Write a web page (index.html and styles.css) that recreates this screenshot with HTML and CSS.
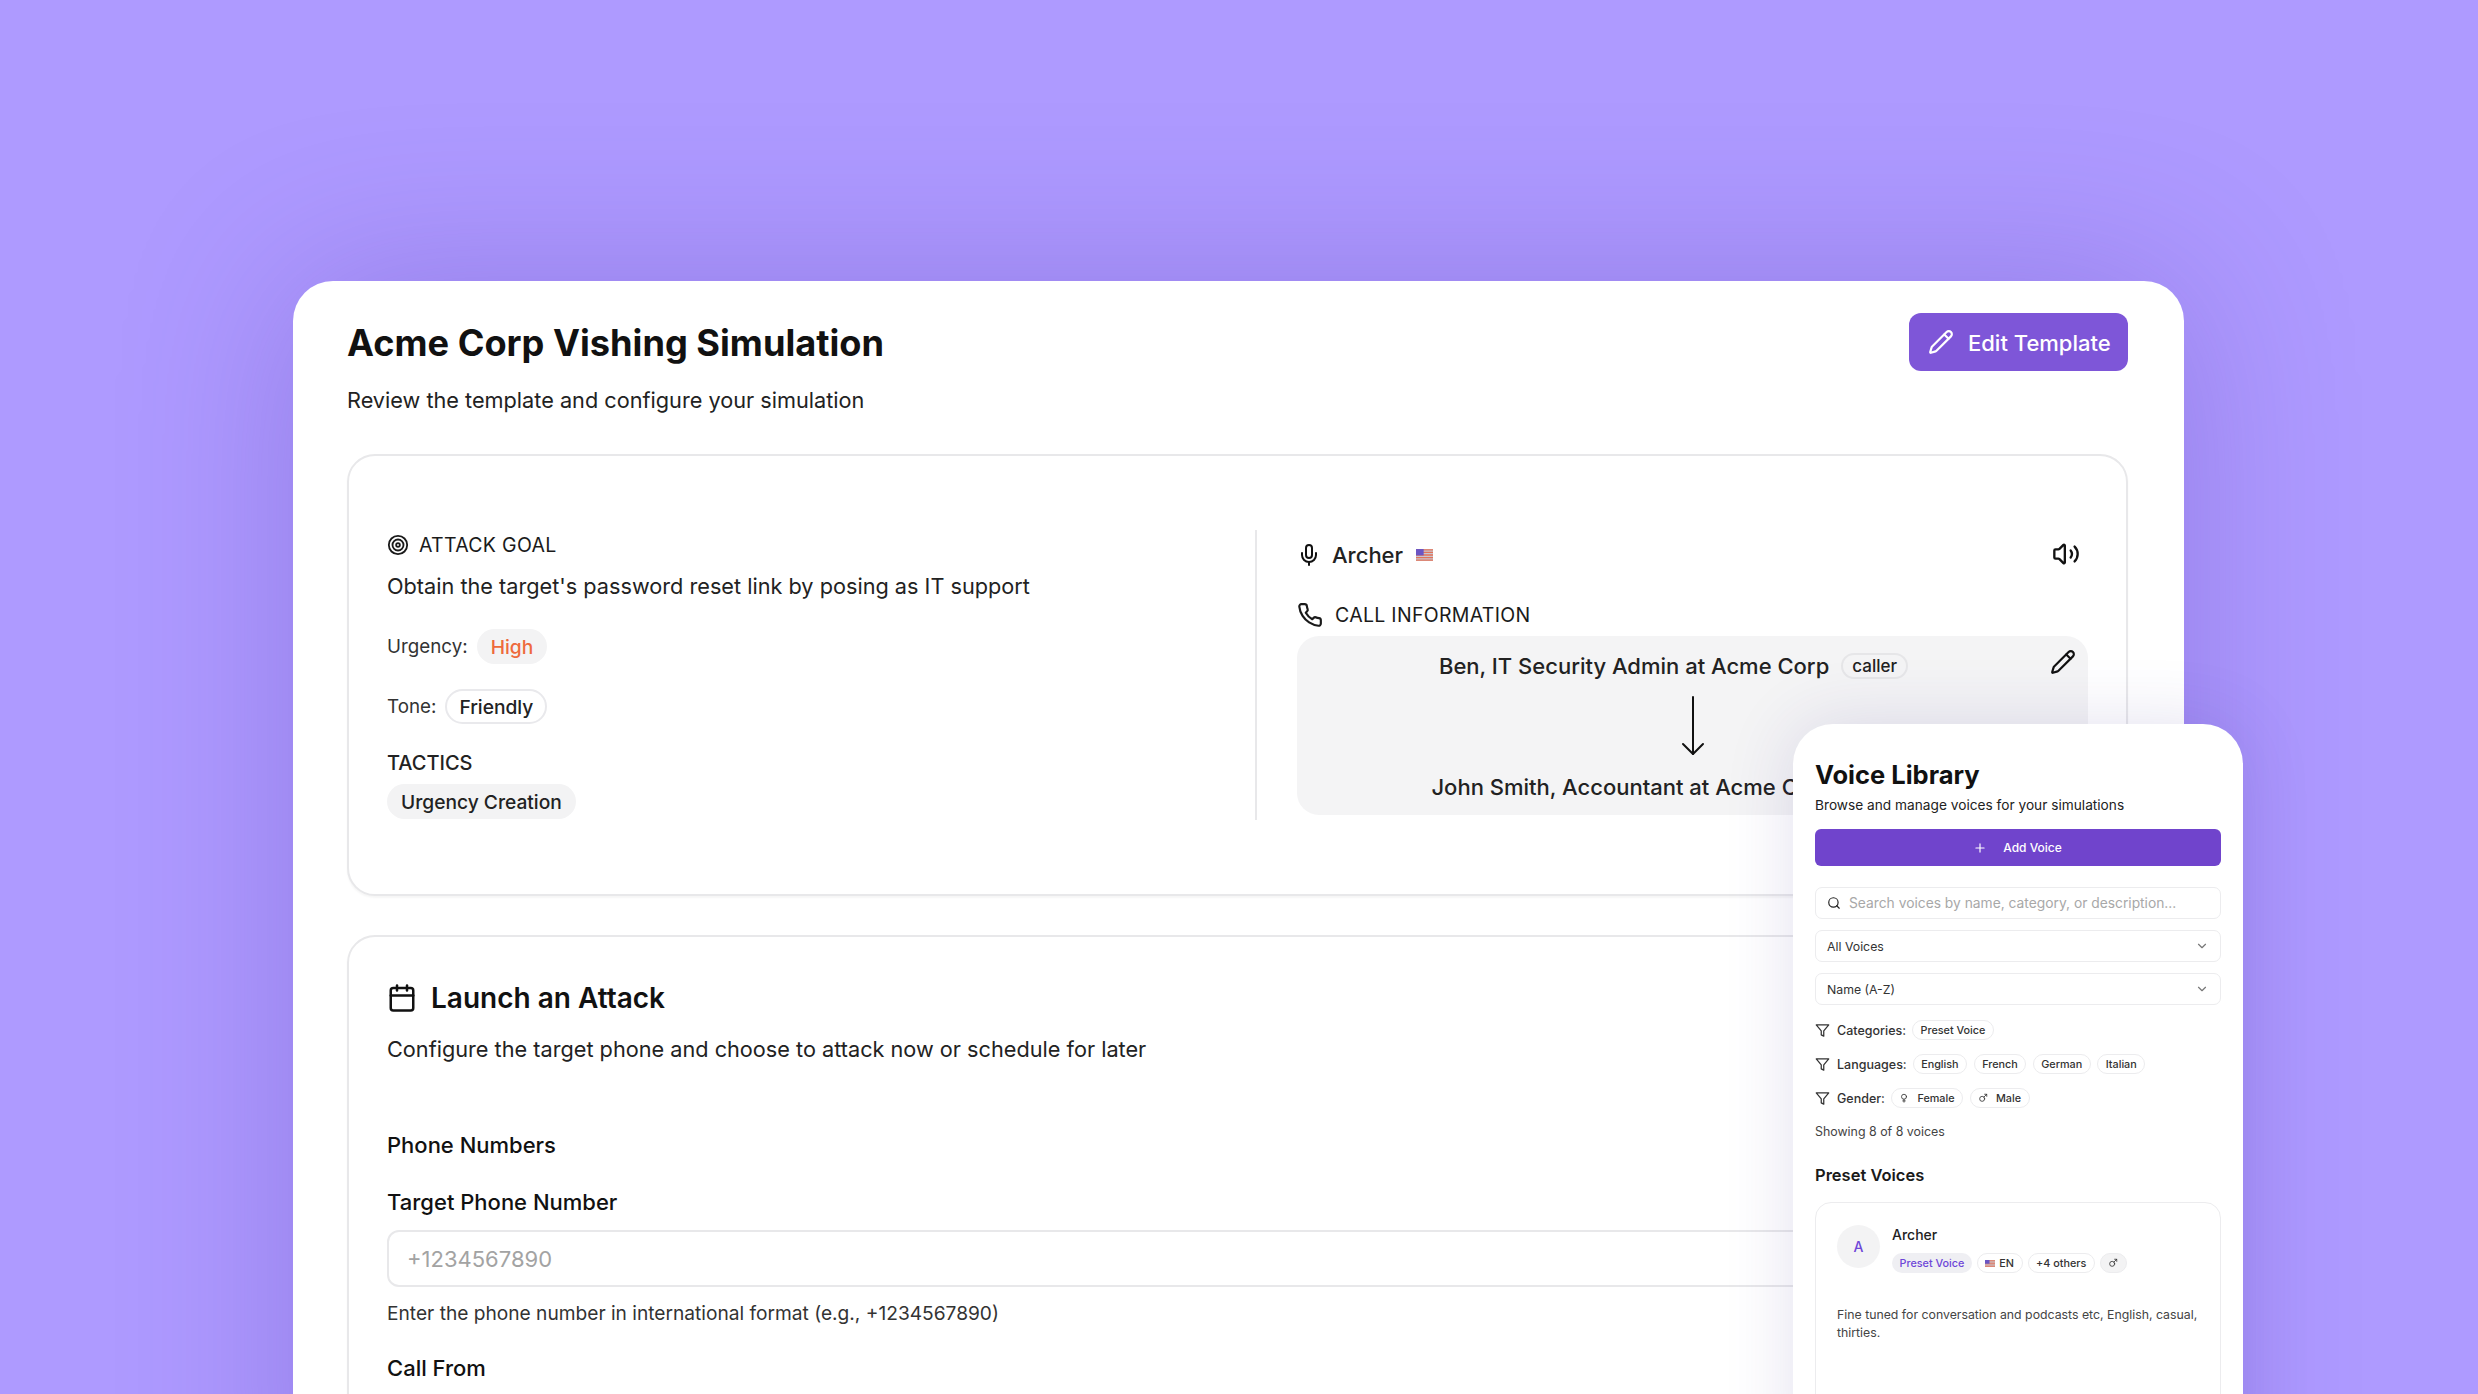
FILE: index.html
```html
<!DOCTYPE html>
<html lang="en">
<head>
  <meta charset="UTF-8">
  <title>Acme Corp Vishing Simulation</title>
  <link rel="stylesheet" href="styles.css">
</head>
<body>
  <svg class="sprite" aria-hidden="true">
    <symbol id="i-pencil" viewBox="0 0 24 24"><path d="M21.174 6.812a1 1 0 0 0-3.986-3.987L3.842 16.174a2 2 0 0 0-.5.83l-1.321 4.352a.5.5 0 0 0 .623.622l4.353-1.32a2 2 0 0 0 .83-.497z"/><path d="m15 5 4 4"/></symbol>
    <symbol id="i-target" viewBox="0 0 24 24"><circle cx="12" cy="12" r="10"/><circle cx="12" cy="12" r="6"/><circle cx="12" cy="12" r="2"/></symbol>
    <symbol id="i-mic" viewBox="0 0 24 24"><path d="M12 19v3"/><path d="M19 10v2a7 7 0 0 1-14 0v-2"/><rect x="9" y="2" width="6" height="13" rx="3"/></symbol>
    <symbol id="i-volume" viewBox="0 0 24 24"><path d="M11 4.702a.705.705 0 0 0-1.203-.498L6.413 7.587A1.4 1.4 0 0 1 5.416 8H3a1 1 0 0 0-1 1v6a1 1 0 0 0 1 1h2.416a1.4 1.4 0 0 1 .997.413l3.383 3.384A.705.705 0 0 0 11 19.298z"/><path d="M16 9a5 5 0 0 1 0 6"/><path d="M19.364 18.364a9 9 0 0 0 0-12.728"/></symbol>
    <symbol id="i-phone" viewBox="0 0 24 24"><path d="M22 16.92v3a2 2 0 0 1-2.18 2 19.79 19.79 0 0 1-8.63-3.07 19.5 19.5 0 0 1-6-6 19.79 19.79 0 0 1-3.07-8.67A2 2 0 0 1 4.11 2h3a2 2 0 0 1 2 1.72 12.84 12.84 0 0 0 .7 2.81 2 2 0 0 1-.45 2.11L8.09 9.91a16 16 0 0 0 6 6l1.27-1.27a2 2 0 0 1 2.11-.45 12.84 12.84 0 0 0 2.81.7A2 2 0 0 1 22 16.92z"/></symbol>
    <symbol id="i-arrow" viewBox="0 0 24 60"><path d="M12 1v57"/><path d="m2 48 10 10 10-10"/></symbol>
    <symbol id="i-calendar" viewBox="0 0 24 24"><path d="M8 2v4"/><path d="M16 2v4"/><rect x="3" y="4" width="18" height="18" rx="2"/><path d="M3 10h18"/></symbol>
    <symbol id="i-plus" viewBox="0 0 24 24"><path d="M5 12h14"/><path d="M12 5v14"/></symbol>
    <symbol id="i-search" viewBox="0 0 24 24"><path d="m21 21-4.34-4.34"/><circle cx="11" cy="11" r="8"/></symbol>
    <symbol id="i-chevron" viewBox="0 0 24 24"><path d="m6 9 6 6 6-6"/></symbol>
    <symbol id="i-filter" viewBox="0 0 24 24"><polygon points="22 3 2 3 10 12.46 10 19 14 21 14 12.46 22 3"/></symbol>
    <symbol id="i-venus" viewBox="0 0 24 24"><path d="M12 15v7"/><path d="M9 19h6"/><circle cx="12" cy="9" r="6"/></symbol>
    <symbol id="i-mars" viewBox="0 0 24 24"><path d="M16 3h5v5"/><path d="m21 3-6.75 6.75"/><circle cx="10" cy="14" r="6"/></symbol>
    <symbol id="i-flag" viewBox="0 0 20 14">
      <rect width="20" height="14" fill="#c9c6cf"/>
      <path d="M0 1h20M0 4h20M0 7h20M0 10h20M0 13h20" stroke="#e2735a" stroke-width="1.5"/>
      <rect width="9" height="7.5" fill="#6a55c4"/>
    </symbol>
  </svg>

  <main class="app">
    <header class="page-head">
      <div>
        <h1>Acme Corp Vishing Simulation</h1>
        <p class="page-sub">Review the template and configure your simulation</p>
      </div>
      <button class="edit-btn"><svg class="icon icon-26"><use href="#i-pencil"/></svg>Edit Template</button>
    </header>

    <section class="card summary">
      <div class="goal">
        <div class="label"><svg class="icon icon-22"><use href="#i-target"/></svg>ATTACK GOAL</div>
        <p class="goal-text">Obtain the target's password reset link by posing as IT support</p>
        <div class="meta urgency">Urgency: <span class="pill pill-grey pill-high">High</span></div>
        <div class="meta tone">Tone: <span class="pill pill-line">Friendly</span></div>
        <div class="tactics-label">TACTICS</div>
        <div class="tactics"><span class="pill pill-grey">Urgency Creation</span></div>
      </div>
      <div class="call">
        <div class="voice-row">
          <svg class="icon icon-24"><use href="#i-mic"/></svg>
          <span class="voice-name">Archer</span>
          <svg class="flag"><use href="#i-flag"/></svg>
          <svg class="icon icon-28 speaker"><use href="#i-volume"/></svg>
        </div>
        <div class="label call-label"><svg class="icon icon-26"><use href="#i-phone"/></svg>CALL INFORMATION</div>
        <div class="call-box">
          <div class="party">Ben, IT Security Admin at Acme Corp <span class="caller">caller</span></div>
          <svg class="icon call-pencil"><use href="#i-pencil"/></svg>
          <svg class="icon call-arrow"><use href="#i-arrow"/></svg>
          <div class="party party-to">John Smith, Accountant at Acme Corp <span class="caller">target</span></div>
        </div>
      </div>
    </section>

    <section class="card launch">
      <h2><svg class="icon icon-30"><use href="#i-calendar"/></svg>Launch an Attack</h2>
      <p class="launch-sub">Configure the target phone and choose to attack now or schedule for later</p>
      <h3 class="phone-head">Phone Numbers</h3>
      <label class="field-label">Target Phone Number</label>
      <input class="phone-input" type="text" placeholder="+1234567890">
      <p class="hint">Enter the phone number in international format (e.g., +1234567890)</p>
      <label class="field-label call-from">Call From</label>
    </section>
  </main>

  <aside class="library">
    <h2>Voice Library</h2>
    <p class="lib-sub">Browse and manage voices for your simulations</p>
    <button class="add-btn"><svg class="icon icon-14"><use href="#i-plus"/></svg>Add Voice</button>
    <div class="box search"><svg class="icon icon-14"><use href="#i-search"/></svg>Search voices by name, category, or description...</div>
    <div class="box select">All Voices<svg class="icon icon-14"><use href="#i-chevron"/></svg></div>
    <div class="box select">Name (A-Z)<svg class="icon icon-14"><use href="#i-chevron"/></svg></div>

    <div class="filter"><svg class="icon icon-15"><use href="#i-filter"/></svg><b>Categories:</b><span class="chip">Preset Voice</span></div>
    <div class="filter"><svg class="icon icon-15"><use href="#i-filter"/></svg><b>Languages:</b><span class="chip">English</span><span class="chip">French</span><span class="chip">German</span><span class="chip">Italian</span></div>
    <div class="filter"><svg class="icon icon-15"><use href="#i-filter"/></svg><b>Gender:</b><span class="chip"><svg class="icon icon-10"><use href="#i-venus"/></svg>Female</span><span class="chip"><svg class="icon icon-10"><use href="#i-mars"/></svg>Male</span></div>
    <p class="count">Showing 8 of 8 voices</p>

    <h3>Preset Voices</h3>
    <div class="voice-card">
      <div class="voice-top">
        <div class="avatar">A</div>
        <div>
          <div class="voice-title">Archer</div>
          <div class="tags">
            <span class="chip chip-preset">Preset Voice</span>
            <span class="chip"><svg class="flag-sm"><use href="#i-flag"/></svg>EN</span>
            <span class="chip">+4 others</span>
            <span class="chip chip-grey"><svg class="icon icon-10"><use href="#i-mars"/></svg></span>
          </div>
        </div>
      </div>
      <p class="voice-desc">Fine tuned for conversation and podcasts etc, English, casual, thirties.</p>
    </div>
  </aside>
</body>
</html>
```

FILE: styles.css
```css
* {
  box-sizing: border-box;
}
body {
  margin: 0;
  height: 1394px;
  overflow: hidden;
  padding: 281px 0 0 293px;
  position: relative;
  background: #ae9aff;
  font-family: Inter, "Noto Sans", sans-serif;
  color: #111;
}
h1, h2, h3, p {
  margin: 0;
}
.sprite {
  display: none;
}
.icon {
  fill: none;
  stroke: currentColor;
  stroke-width: 2;
  stroke-linecap: round;
  stroke-linejoin: round;
  flex: none;
}
.icon-10 { width: 10px; height: 10px; }
.icon-14 { width: 14px; height: 14px; }
.icon-15 { width: 15px; height: 15px; }
.icon-22 { width: 22px; height: 22px; }
.icon-24 { width: 24px; height: 24px; }
.icon-26 { width: 26px; height: 26px; }
.icon-28 { width: 28px; height: 28px; }
.icon-30 { width: 30px; height: 30px; }

.app {
  width: 1891px;
  height: 1300px;
  padding: 32px 56px 0 54px;
  background: #fff;
  border-radius: 40px;
  box-shadow: 0 0 170px rgba(80, 50, 170, 0.28);
}
.page-head {
  display: flex;
  justify-content: space-between;
  align-items: flex-start;
}
h1 {
  margin-top: 8px;
  font-size: 36.2px;
  line-height: 44px;
  font-weight: 700;
}
.page-sub {
  margin-top: 20px;
  font-size: 21.7px;
  line-height: 30px;
  color: #222;
}
.edit-btn {
  display: flex;
  align-items: center;
  gap: 14px;
  width: 219px;
  height: 58px;
  padding: 2px 19px 0;
  border: none;
  border-radius: 12px;
  background: #7e56d8;
  color: #fff;
  font: 500 22px Inter, sans-serif;
  white-space: nowrap;
}
.edit-btn .icon {
  margin-top: -2px;
}

.card {
  border: 2px solid #e8e8ea;
  border-radius: 28px;
  background: #fff;
  box-shadow: 0 2px 2px rgba(0, 0, 0, 0.04);
}
.summary {
  margin-top: 39px;
  display: flex;
  height: 442px;
  padding: 74px 38px;
}
.goal {
  flex: 0 0 870px;
  border-right: 2px solid #e8e8ea;
}
.label {
  display: flex;
  align-items: center;
  gap: 10px;
  font-size: 19.5px;
  line-height: 30px;
  letter-spacing: 0.3px;
  color: #1a1a1a;
}
.goal-text {
  margin-top: 11px;
  font-size: 21.7px;
  line-height: 30px;
  color: #222;
}
.meta {
  display: flex;
  align-items: center;
  gap: 9px;
  font-size: 18.8px;
  color: #333;
}
.urgency {
  margin-top: 28px;
}
.tone {
  margin-top: 25px;
}
.pill {
  display: inline-flex;
  align-items: center;
  height: 35px;
  padding: 0 14px;
  border-radius: 18px;
  font-size: 19.2px;
  font-weight: 500;
  color: #222;
}
.pill-grey {
  background: #f3f3f4;
}
.pill-high {
  color: #ee6a3c;
}
.pill-line {
  padding: 0 12px;
  border: 2px solid #e9e9ec;
}
.tactics-label {
  margin-top: 26px;
  font-size: 20px;
  line-height: 26px;
  font-weight: 500;
  color: #222;
}
.tactics {
  margin-top: 8px;
}

.call {
  margin-left: 40px;
  flex: 0 0 791px;
  padding-top: 2px;
}
.voice-row {
  display: flex;
  align-items: center;
  height: 30px;
  margin-top: 8px;
}
.voice-name {
  margin-left: 11px;
  font-size: 22px;
  font-weight: 500;
  color: #222;
}
.flag {
  width: 17px;
  height: 12px;
  margin-left: 13px;
}
.speaker {
  margin: 0 8px 2px auto;
}
.call-label {
  margin-top: 33px;
  height: 24px;
  line-height: 24px;
  gap: 12px;
}
.call-box {
  position: relative;
  margin-top: 9px;
  height: 179px;
  padding-top: 16px;
  border-radius: 22px;
  background: #f4f4f5;
  text-align: center;
}
.party {
  display: flex;
  justify-content: center;
  align-items: center;
  gap: 12px;
  height: 28px;
  padding-right: 38px;
  font-size: 22px;
  font-weight: 500;
  color: #222;
}
.party-to {
  margin-top: 17px;
}
.caller {
  display: inline-block;
  height: 26px;
  padding: 0 9px;
  border: 2px solid #e6e6e8;
  border-radius: 14px;
  font-size: 17px;
  line-height: 22px;
  font-weight: 500;
}
.call-pencil {
  position: absolute;
  top: 13px;
  right: 12px;
  width: 26px;
  height: 26px;
}
.call-arrow {
  display: block;
  width: 24px;
  height: 60px;
  margin: 16px auto 0;
}

.launch {
  margin-top: 39px;
  height: 600px;
  padding: 41px 38px 0;
}
.launch h2 {
  display: flex;
  align-items: center;
  gap: 14px;
  font-size: 28px;
  line-height: 40px;
  font-weight: 600;
}
.launch-sub {
  margin-top: 16px;
  font-size: 21.7px;
  line-height: 30px;
  color: #222;
}
.phone-head {
  margin-top: 67px;
  font-size: 22px;
  line-height: 28px;
  font-weight: 500;
}
.field-label {
  display: block;
  margin-top: 29px;
  font-size: 22px;
  line-height: 28px;
  font-weight: 500;
}
.phone-input {
  display: block;
  width: 100%;
  height: 57px;
  margin-top: 14px;
  padding: 0 18px;
  border: 2px solid #e8e8ea;
  border-radius: 12px;
  font: 400 22px Inter, sans-serif;
}
.phone-input::placeholder {
  color: #a3a3a3;
}
.hint {
  margin-top: 13px;
  font-size: 19.15px;
  line-height: 26px;
  color: #333;
}
.call-from {
  margin-top: 28px;
}

.library {
  position: absolute;
  left: 1793px;
  top: 724px;
  width: 450px;
  height: 760px;
  padding: 36px 22px 0;
  background: #fff;
  border-radius: 40px;
  box-shadow: 0 0 70px rgba(60, 40, 140, 0.14);
}
.library h2 {
  font-size: 25.5px;
  line-height: 30px;
  font-weight: 700;
}
.lib-sub {
  margin-top: 5px;
  font-size: 13.7px;
  line-height: 20px;
  color: #222;
}
.add-btn {
  display: flex;
  justify-content: center;
  align-items: center;
  gap: 16px;
  width: 100%;
  height: 37px;
  margin-top: 14px;
  padding-right: 7px;
  border: none;
  border-radius: 6px;
  background: #7044cc;
  color: #fff;
  font: 500 12px Inter, sans-serif;
}
.box {
  display: flex;
  align-items: center;
  height: 32px;
  margin-top: 11px;
  padding: 0 11px;
  border: 1.5px solid #ececee;
  border-radius: 7px;
  font-size: 12.3px;
  color: #333;
}
.search {
  margin-top: 21px;
  gap: 8px;
  font-size: 13.8px;
  color: #a8a8a8;
}
.search .icon {
  color: #222;
}
.select {
  justify-content: space-between;
}
.select .icon {
  color: #777;
}
.filter {
  display: flex;
  align-items: center;
  height: 20px;
  margin-top: 14px;
  font-size: 12.5px;
  color: #333;
}
.box + .filter {
  margin-top: 15px;
}
.filter b {
  margin: 0 6px 0 7px;
  font-weight: 500;
}
.filter .chip + .chip {
  margin-left: 6.5px;
}
.chip {
  display: inline-flex;
  align-items: center;
  gap: 8px;
  height: 20px;
  padding: 0 7.5px;
  border: 1.5px solid #ececee;
  border-radius: 10px;
  font-size: 10.8px;
  font-weight: 500;
  color: #333;
}
.count {
  margin-top: 14px;
  font-size: 12.4px;
  line-height: 20px;
  color: #444;
}
.library h3 {
  margin-top: 21px;
  font-size: 16.5px;
  line-height: 24px;
  font-weight: 600;
  color: #1a1a1a;
}
.voice-card {
  margin-top: 15px;
  height: 300px;
  padding: 22px 21px;
  border: 1.5px solid #ececee;
  border-radius: 16px;
}
.voice-top {
  display: flex;
  gap: 12px;
}
.avatar {
  width: 43px;
  height: 43px;
  border-radius: 50%;
  background: #f3f3f4;
  color: #6e46d8;
  font-size: 14px;
  font-weight: 500;
  line-height: 43px;
  text-align: center;
}
.voice-title {
  font-size: 14px;
  line-height: 20px;
  font-weight: 500;
  color: #222;
}
.tags {
  display: flex;
  gap: 5px;
  margin-top: 8px;
}
.tags .chip {
  gap: 4px;
}
.chip-preset {
  border: none;
  background: #efeff3;
  color: #6e46d8;
}
.chip-grey {
  background: #f3f3f4;
}
.flag-sm {
  width: 10px;
  height: 7px;
}
.voice-desc {
  margin-top: 33px;
  font-size: 12.3px;
  line-height: 18px;
  color: #444;
}
```
